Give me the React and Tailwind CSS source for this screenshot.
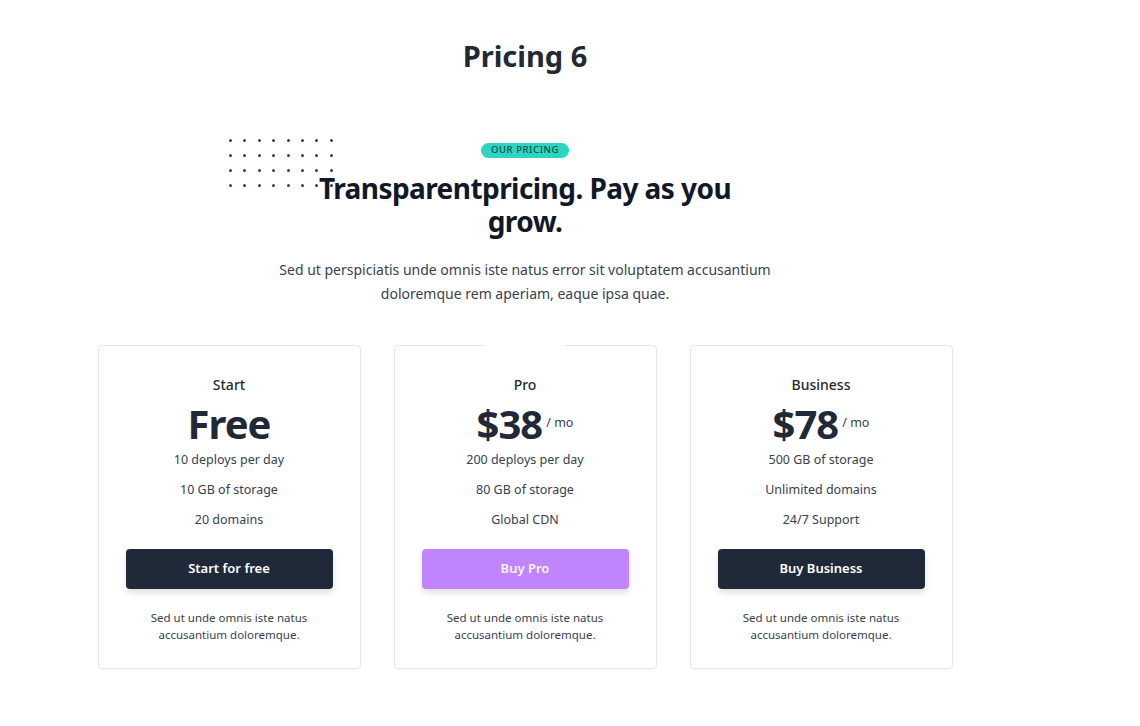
const plans = [
  {
    name: 'Start',
    price: 'Free',
    perMonth: false,
    features: ['10 deploys per day', '10 GB of storage', '20 domains'],
    cta: 'Start for free',
    ctaClass: 'bg-[#1f2937] text-white',
  },
  {
    name: 'Pro',
    price: '$38',
    perMonth: true,
    features: ['200 deploys per day', '80 GB of storage', 'Global CDN'],
    cta: 'Buy Pro',
    ctaClass: 'bg-[#c084fc] text-[#faf5ff]',
    popular: true,
  },
  {
    name: 'Business',
    price: '$78',
    perMonth: true,
    features: ['500 GB of storage', 'Unlimited domains', '24/7 Support'],
    cta: 'Buy Business',
    ctaClass: 'bg-[#1f2937] text-white',
  },
];

const DotGrid = () => (
  <div className="grid grid-cols-8 gap-x-[11.4px] gap-y-[12px] w-fit">
    {Array.from({ length: 32 }).map((_, i) => (
      <span key={i} className="block w-[3px] h-[3px] rounded-full bg-[#374151]" />
    ))}
  </div>
);

const PlanCard = ({ plan }) => (
  <div className="relative w-[263px] h-[324px] border border-gray-200 rounded shadow-[0_1px_2px_rgba(0,0,0,0.04)] bg-white flex flex-col items-center px-[27px] pt-[28px]">
    {plan.popular && (
      <span className="absolute -top-[2px] left-[90px] w-[80px] h-[4px] bg-white" />
    )}
    <h3 className="text-[14px] leading-[22px] font-medium text-[#1f2937]">{plan.name}</h3>
    <div className="flex items-start mt-[4px]">
      <span className="text-[40px] leading-[48px] font-bold text-[#1f2937] tracking-tight">{plan.price}</span>
      {plan.perMonth && (
        <span className="text-[12.5px] leading-none text-[#374151] ml-[4px] mt-[17px]">/ mo</span>
      )}
    </div>
    <ul className="flex flex-col items-center gap-[12px] mt-[3px] text-[12.5px] leading-[18px] text-[#374151]">
      {plan.features.map((f) => (
        <li key={f}>{f}</li>
      ))}
    </ul>
    <button className={`mt-[20px] w-full h-[40px] rounded text-[13px] font-semibold shadow-[0_4px_6px_rgba(0,0,0,0.12)] ${plan.ctaClass}`}>
      {plan.cta}
    </button>
    <p className="mt-[20px] text-[11.5px] leading-[17px] text-[#374151] text-center w-[160px]">
      Sed ut unde omnis iste natus accusantium doloremque.
    </p>
  </div>
);

export default function App() {
  return (
    <div className="min-h-screen bg-white font-['Noto_Sans',sans-serif] text-[#1f2937]">
      <div className="w-[1050px] pt-[36px] pb-[56px]">
        <h1 className="text-center text-[29px] leading-[40px] font-bold text-[#1f2937]">Pricing 6</h1>

        <div className="relative mt-[67px] flex flex-col items-center">
          <div className="absolute left-[229px] top-[-4px]">
            <DotGrid />
          </div>
          <span className="relative rounded-full bg-[#2dd4bf] px-[10px] h-[15px] flex items-center text-[9.5px] font-medium tracking-[0.06em] text-[#134e4a] uppercase">
            Our pricing
          </span>
          <h2 className="relative mt-[14px] w-[430px] text-center text-[28px] leading-[33px] font-bold text-[#111827] tracking-[-0.02em]">
            Transparentpricing. Pay as you grow.
          </h2>
          <p className="mt-[20px] w-[500px] text-center text-[14px] leading-[24px] text-[#374151]">
            Sed ut perspiciatis unde omnis iste natus error sit voluptatem accusantium doloremque rem aperiam, eaque ipsa quae.
          </p>
        </div>

        <div className="mt-[39px] flex justify-center gap-[33px]">
          {plans.map((p) => (
            <PlanCard key={p.name} plan={p} />
          ))}
        </div>
      </div>
    </div>
  );
}
